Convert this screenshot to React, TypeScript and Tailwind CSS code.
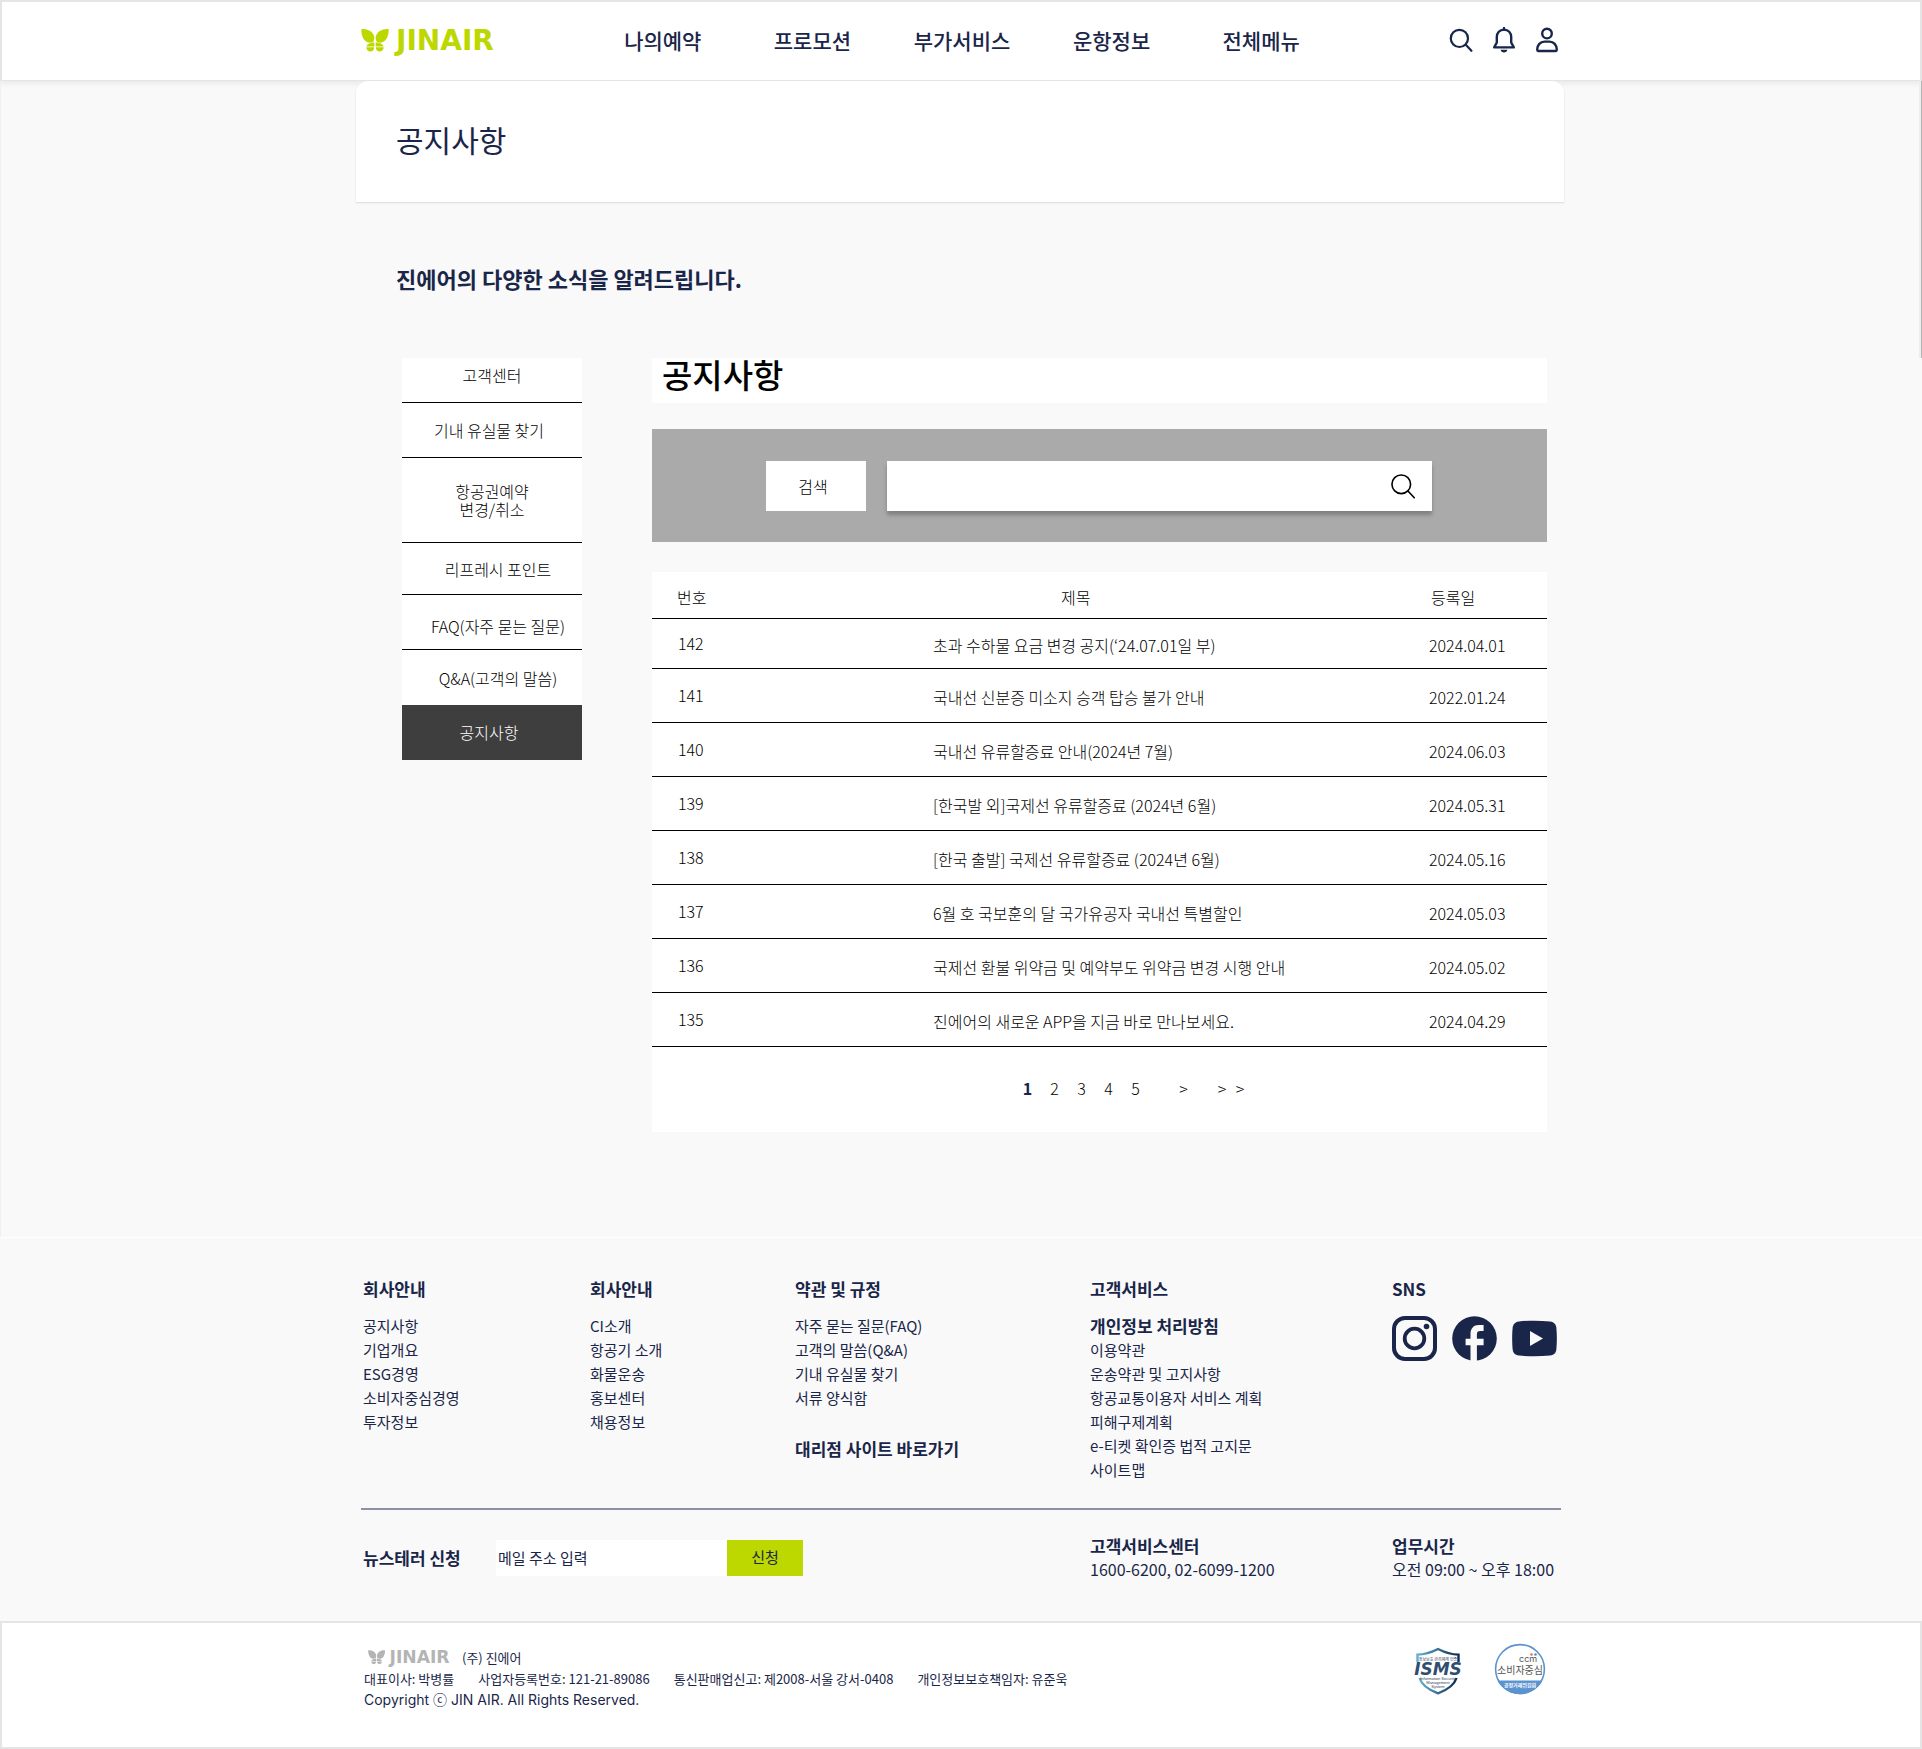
import React from "react";

const NAV = ["나의예약", "프로모션", "부가서비스", "운항정보", "전체메뉴"];

const SIDE = [
  { label: ["고객센터"], row: "h-[45px] pb-2.5 border-b" },
  { label: ["기내 유실물 찾기"], row: "h-[55px] pr-1.5 border-b" },
  { label: ["항공권예약", "변경/취소"], row: "h-[85px] border-b" },
  { label: ["리프레시 포인트"], row: "h-[52px] pl-3 border-b" },
  { label: ["FAQ(자주 묻는 질문)"], row: "h-[55px] pl-3 pt-2 border-b" },
  { label: ["Q&A(고객의 말씀)"], row: "h-[55px] pl-3" },
];

const ROWS = [
  ["142", "초과 수하물 요금 변경 공지(‘24.07.01일 부)", "2024.04.01"],
  ["141", "국내선 신분증 미소지 승객 탑승 불가 안내", "2022.01.24"],
  ["140", "국내선 유류할증료 안내(2024년 7월)", "2024.06.03"],
  ["139", "[한국발 외]국제선 유류할증료 (2024년 6월)", "2024.05.31"],
  ["138", "[한국 출발] 국제선 유류할증료 (2024년 6월)", "2024.05.16"],
  ["137", "6월 호 국보훈의 달 국가유공자 국내선 특별할인", "2024.05.03"],
  ["136", "국제선 환불 위약금 및 예약부도 위약금 변경 시행 안내", "2024.05.02"],
  ["135", "진에어의 새로운 APP을 지금 바로 만나보세요.", "2024.04.29"],
];

const ABOUT = ["공지사항", "기업개요", "ESG경영", "소비자중심경영", "투자정보"];
const COMPANY = ["CI소개", "항공기 소개", "화물운송", "홍보센터", "채용정보"];
const TERMS = ["자주 묻는 질문(FAQ)", "고객의 말씀(Q&A)", "기내 유실물 찾기", "서류 양식함"];
const SERVICE = [
  "이용약관",
  "운송약관 및 고지사항",
  "항공교통이용자 서비스 계획",
  "피해구제계획",
  "e-티켓 확인증 법적 고지문",
  "사이트맵",
];

function Logo({ className }: { className: string }) {
  return (
    <svg viewBox="0 0 140 24" className={`overflow-visible ${className}`} fill="currentColor" role="img" aria-label="JIN AIR">
      <path d="M0.4 1C6 0.4 12.2 3.2 13.2 8.6C13.6 11.4 13 13.4 11.6 14.2C9 15.4 4.6 14.4 2.600 11C1 8 0 4.500 0.4 1Z" />
      <path d="M27.600 1C22 0.400 15.800 3.200 14.800 8.600C14.400 11.400 15 13.400 16.400 14.200C19 15.400 23.400 14.400 25.400 11C27 8 28 4.500 27.600 1Z" />
      <path d="M13.400 14.600C9.600 14.700 6.200 16 5.400 18.600H13.400Z" />
      <path d="M14.600 14.600C18.400 14.700 21.800 16 22.600 18.600H14.600Z" />
      <path d="M5.400 19.200H13.200C13.300 21.600 11.800 23.400 9.400 23.400C7 23.400 5.300 21.600 5.400 19.200Z" />
      <path d="M22.600 19.200H14.800C14.700 21.600 16.200 23.400 18.600 23.400C21 23.400 22.700 21.600 22.600 19.200Z" />
      <text x="35" y="22" fontFamily="DejaVu Sans" fontWeight="700" fontSize="28">
        JINAIR
      </text>
    </svg>
  );
}

function SearchIcon({ className, width }: { className: string; width: number }) {
  return (
    <svg viewBox="0 0 24 24" className={className} fill="none" stroke="currentColor" strokeWidth={width} strokeLinecap="round">
      <circle cx="10.4" cy="10.4" r="8.6" />
      <path d="M16.8 16.8L22.4 22.8" />
    </svg>
  );
}

function BellIcon() {
  return (
    <svg viewBox="0 0 24 26" className="h-[26px] w-6" fill="none" stroke="currentColor" strokeWidth="2.4" strokeLinejoin="round">
      <path d="M12 2.600C7.600 2.600 4.800 5.800 4.800 10V15.500L2.200 20.400H21.800L19.200 15.500V10C19.200 5.800 16.400 2.600 12 2.600Z" />
      <path d="M12 1V2.600" strokeLinecap="round" />
      <path d="M8.600 22.800H15.400C15 24.600 13.800 25.400 12 25.400C10.200 25.400 9 24.600 8.600 22.800Z" fill="currentColor" stroke="none" />
    </svg>
  );
}

function UserIcon() {
  return (
    <svg viewBox="0 0 24 26" className="h-[26px] w-6" fill="none" stroke="currentColor" strokeWidth="2.4" strokeLinejoin="round">
      <circle cx="12" cy="6.600" r="4.800" />
      <path d="M2.200 22.600C2.200 18 5.400 14.600 9.400 14.600H14.600C18.600 14.600 21.800 18 21.800 22.600C21.800 23.600 21.600 24 20.800 24H3.200C2.400 24 2.200 23.600 2.200 22.600Z" />
    </svg>
  );
}

function Instagram() {
  return (
    <svg viewBox="0 0 45 45" className="size-[45px]" fill="none" stroke="currentColor">
      <rect x="2" y="2" width="41" height="41" rx="11" strokeWidth="4" />
      <circle cx="22.5" cy="22.5" r="9.8" strokeWidth="3.8" />
      <circle cx="34.5" cy="10.5" r="2.8" fill="currentColor" stroke="none" />
    </svg>
  );
}

function Facebook() {
  return (
    <svg viewBox="0 0 45 45" className="size-[45px]">
      <circle cx="22.5" cy="22.5" r="22.3" fill="currentColor" />
      <path d="M18.5 45V29.2H13.6V22.8H18.5V18C18.5 12.4 21.6 9 26.8 9H31.6V15H28.4C25.8 15 24.9 16.2 24.9 18.4V22.8H31.6V29.2H24.9V45Z" fill="#f9f9f9" />
    </svg>
  );
}

function Youtube() {
  return (
    <svg viewBox="0 0 45 45" className="size-[45px]">
      <path d="M7 5.4C17 4.4 28 4.4 38 5.4C42.4 6 44 8.4 44.4 12C45 19 45 26 44.4 33C44 36.8 42.4 39 38 39.6C28 40.6 17 40.6 7 39.6C2.6 39 1 36.8 0.6 33C0 26 0 19 0.6 12C1 8.4 2.6 6 7 5.4Z" fill="currentColor" />
      <path d="M18 15V30L31 22.5Z" fill="#f9f9f9" />
    </svg>
  );
}

function IsmsBadge() {
  return (
    <svg viewBox="0 0 52 48" className="h-12 w-[52px] overflow-visible" role="img" aria-label="ISMS 정보보호 관리체계 인증">
      <defs>
        <linearGradient id="shield" x1="0" x2="1">
          <stop offset="0" stopColor="#5fb0d4" />
          <stop offset="1" stopColor="#0d2c54" />
        </linearGradient>
      </defs>
      <g fill="none" stroke="url(#shield)" strokeWidth="2.4">
        <path d="M5.5 15V7.6C13 7.6 19 5.6 26 2C33 5.6 39 7.6 46.5 7.6V15" />
        <path d="M7.5 31C10 39 17 43 26 46.3C35 43 42 39 44.500 31" />
      </g>
      <text x="26" y="14" textAnchor="middle" fontFamily="Noto Sans CJK KR" fontSize="4" fill="#2c3e5c">
        정보보호 관리체계 인증
      </text>
      <text x="26" y="28" textAnchor="middle" fontFamily="DejaVu Sans" fontWeight="700" fontStyle="italic" fontSize="17" fill="#2f4d70">
        ISMS
      </text>
      <g textAnchor="middle" fontFamily="Liberation Sans" fontSize="4" fill="#2c3e5c">
        <text x="26" y="33">Information Security</text>
        <text x="26" y="37">Management</text>
        <text x="26" y="41">System</text>
      </g>
    </svg>
  );
}

function CcmBadge() {
  return (
    <svg viewBox="0 0 52 52" className="size-[52px]" role="img" aria-label="소비자중심 공정거래위원회">
      <circle cx="26" cy="26" r="24.4" fill="#fff" stroke="#5b93cf" strokeWidth="1.6" />
      <path d="M3.5 37.5H48.5A25.2 25.2 0 0 1 3.5 37.5Z" fill="#5b93cf" />
      <text x="25" y="18.500" fontFamily="Inter" fontSize="9" fill="#555">
        ccm
      </text>
      <circle cx="37.500" cy="11.500" r="1.300" fill="#e8743b" />
      <circle cx="41.500" cy="11.500" r="1.300" fill="#4a8fd0" />
      <text x="26" y="31" textAnchor="middle" fontFamily="Noto Sans CJK KR" fontSize="10" fill="#555">
        소비자중심
      </text>
      <text x="26" y="44" textAnchor="middle" fontFamily="Noto Sans CJK KR" fontWeight="700" fontSize="5" fill="#fff">
        공정거래위원회
      </text>
    </svg>
  );
}

function FooterLinks({ items }: { items: string[] }) {
  return (
    <ul className="text-[15px] leading-6">
      {items.map((t) => (
        <li key={t}>
          <a href="#">{t}</a>
        </li>
      ))}
    </ul>
  );
}

const H = "text-[17px] leading-6 font-bold";
const COLS = "mx-auto grid max-w-[1200px] grid-cols-[227px_205px_295px_302px_1fr] pl-0.5";

export default function App() {
  return (
    <div className="w-full bg-[#f9f9f9] font-['Noto_Sans_CJK_KR',sans-serif] text-[#1a2649]">
      <header className="relative border-2 border-b border-[#e5e5e5] bg-white shadow-[0_2px_6px_rgba(0,0,0,0.08)]">
        <div className="mx-auto flex h-[78px] max-w-[1200px] items-center pb-0.5">
          <a href="#" className="w-[227px] text-[#bdd700]">
            <Logo className="h-6 w-[140px]" />
          </a>
          <nav className="grid w-[748px] grid-cols-5 text-center text-[21px] leading-8 font-medium">
            {NAV.map((n) => (
              <a key={n} href="#">
                {n}
              </a>
            ))}
          </nav>
          <div className="ml-auto flex items-center gap-[19px] pr-0.5">
            <button aria-label="검색">
              <SearchIcon className="size-6" width={2.2} />
            </button>
            <button aria-label="알림">
              <BellIcon />
            </button>
            <button aria-label="내 정보">
              <UserIcon />
            </button>
          </div>
        </div>
      </header>

      <main className="relative border-l border-[#f0f0f0] pr-[3px]">
        <div className="absolute top-0 right-0 h-[277px] w-[3px] border-r border-l-2 border-r-[#b4b4b4] border-l-[#eeeeee]" />
        <div className="mx-auto max-w-[1208px] pb-[105px]">
          <div className="flex h-[121px] items-center rounded-t-xl bg-white px-10 pb-1.5 shadow-[0_1px_2px_rgba(0,0,0,0.12)]">
            <h1 className="text-[30px] leading-10">공지사항</h1>
          </div>
          <p className="px-10 pt-[60px] text-[22px] leading-8 font-bold">진에어의 다양한 소식을 알려드립니다.</p>

          <div className="flex items-start gap-[70px] pt-16 pr-[17px] pl-[46px] text-base font-light text-black">
            <nav className="w-[180px] shrink-0 bg-white">
              {SIDE.map((s) => (
                <a
                  key={s.label[0]}
                  href="#"
                  className={`flex flex-col items-center justify-center border-black leading-[18px] whitespace-nowrap ${s.row}`}
                >
                  {s.label.map((l) => (
                    <span key={l}>{l}</span>
                  ))}
                </a>
              ))}
              <a href="#" aria-current="page" className="flex h-[55px] items-center justify-center bg-[#3e3e3e] pr-1.5 pb-0.5 text-white">
                공지사항
              </a>
            </nav>

            <section className="min-w-0 grow">
              <h2 className="h-[45px] bg-white pl-2.5 text-[33px] leading-8 font-medium">공지사항</h2>

              <form className="mt-[26px] flex h-[113px] items-center gap-[21px] bg-[#aaaaaa] pr-[115px] pl-[114px]">
                <button type="button" className="h-[50px] w-[100px] shrink-0 bg-white pr-1.5 font-light">
                  검색
                </button>
                <div className="flex h-[50px] grow items-center bg-white pr-4 shadow-[0_4px_4px_rgba(0,0,0,0.25)]">
                  <input aria-label="검색어" className="h-full grow px-4 outline-none" />
                  <button type="button" aria-label="검색 실행">
                    <SearchIcon className="size-[26px]" width={1.5} />
                  </button>
                </div>
              </form>

              <div className="mt-[30px] bg-white pb-8">
                <table className="w-full table-fixed border-collapse text-left">
                  <colgroup>
                    <col className="w-[281px]" />
                    <col />
                    <col className="w-[118px]" />
                  </colgroup>
                  <thead>
                    <tr className="h-[46px] border-b border-black">
                      <th className="pt-1 pl-[25px] font-light">번호</th>
                      <th className="pt-1 pl-32 font-light">제목</th>
                      <th className="pt-1 pl-0.5 font-light">등록일</th>
                    </tr>
                  </thead>
                  <tbody>
                    {ROWS.map(([no, title, date]) => (
                      <tr key={no} className="h-[54px] border-b border-black first:h-[50px]">
                        <td className="pl-[26px]">{no}</td>
                        <td className="pt-1">
                          <a href="#">{title}</a>
                        </td>
                        <td className="pt-1">{date}</td>
                      </tr>
                    ))}
                  </tbody>
                </table>
                <nav aria-label="페이지" className="flex items-center justify-center pt-[29px] pl-16 text-center leading-6">
                  <a href="#" aria-current="page" className="w-[27px] font-bold text-[#1a2649]">
                    1
                  </a>
                  {["2", "3", "4", "5"].map((p) => (
                    <a key={p} href="#" className="w-[27px]">
                      {p}
                    </a>
                  ))}
                  <a href="#" aria-label="다음" className="ml-[21px] w-[27px]">
                    &gt;
                  </a>
                  <a href="#" aria-label="마지막" className="ml-4 grid w-9 grid-cols-2">
                    <span>&gt;</span>
                    <span>&gt;</span>
                  </a>
                </nav>
              </div>
            </section>
          </div>
        </div>
      </main>

      <footer className="border-t border-white">
        <div className={`${COLS} h-[270px] pt-[39px]`}>
          <div>
            <h3 className={`${H} mb-[13px]`}>회사안내</h3>
            <FooterLinks items={ABOUT} />
          </div>
          <div>
            <h3 className={`${H} mb-[13px]`}>회사안내</h3>
            <FooterLinks items={COMPANY} />
          </div>
          <div>
            <h3 className={`${H} mb-[13px]`}>약관 및 규정</h3>
            <FooterLinks items={TERMS} />
            <a href="#" className={`${H} mt-[27px] block`}>
              대리점 사이트 바로가기
            </a>
          </div>
          <div>
            <h3 className={`${H} mb-[13px]`}>고객서비스</h3>
            <a href="#" className={`${H} block`}>
              개인정보 처리방침
            </a>
            <FooterLinks items={SERVICE} />
          </div>
          <div>
            <h3 className={`${H} mb-[15px]`}>SNS</h3>
            <div className="flex gap-[15px]">
              <a href="#" aria-label="Instagram">
                <Instagram />
              </a>
              <a href="#" aria-label="Facebook">
                <Facebook />
              </a>
              <a href="#" aria-label="YouTube">
                <Youtube />
              </a>
            </div>
          </div>
        </div>
        <hr className="mx-auto max-w-[1200px] border-t-2 border-[#8c91a6]" />
        <div className={`${COLS} h-[111px] pt-[24px]`}>
          <form className="col-span-3 flex h-12 items-center">
            <label htmlFor="mail" className={`${H} w-[133px]`}>
              뉴스테러 신청
            </label>
            <input
              id="mail"
              type="email"
              placeholder="메일 주소 입력"
              className="h-9 w-[231px] bg-white px-0.5 text-[15px] outline-none placeholder:text-[#1a2649]"
            />
            <button type="button" className="h-9 w-[76px] bg-[#bdd700] text-[15px]">
              신청
            </button>
          </form>
          <div>
            <h3 className={H}>고객서비스센터</h3>
            <p className="text-base leading-[22px]">1600-6200, 02-6099-1200</p>
          </div>
          <div>
            <h3 className={H}>업무시간</h3>
            <p className="text-base leading-[22px]">오전 09:00 ~ 오후 18:00</p>
          </div>
        </div>
        <div className="border-2 border-[#e5e5e5] bg-white">
          <div className="mx-auto flex h-[124px] max-w-[1200px] items-start justify-between pt-5 pr-[15px] pl-[3px]">
            <div className="pt-1 text-[13px] leading-[21px]">
              <div className="flex items-center gap-2 pl-1">
                <Logo className="h-4 w-[86px] text-[#b4b4b4]" />
                <span>(주) 진에어</span>
              </div>
              <div className="flex gap-6">
                <span>대표이사: 박병률</span>
                <span>사업자등록번호: 121-21-89086</span>
                <span>통신판매업신고: 제2008-서울 강서-0408</span>
                <span>개인정보보호책임자: 유준욱</span>
              </div>
              <p className="font-['Inter','Noto_Sans_CJK_KR',sans-serif] text-sm leading-[22px]">
                Copyright ⓒ JIN AIR. All Rights Reserved.
              </p>
            </div>
            <div className="flex gap-[30px]">
              <div className="pt-1">
                <IsmsBadge />
              </div>
              <CcmBadge />
            </div>
          </div>
        </div>
      </footer>
    </div>
  );
}
